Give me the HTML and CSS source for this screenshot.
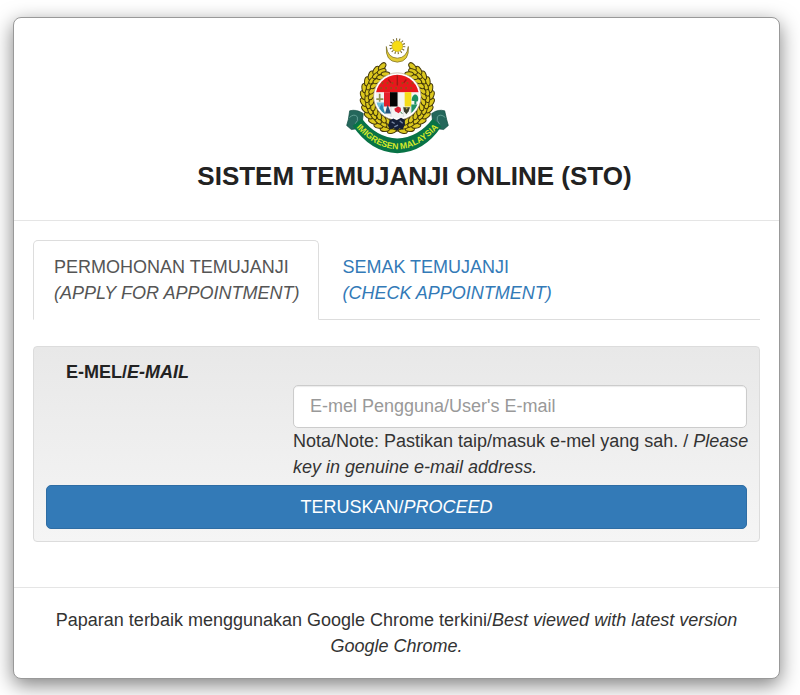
FILE: index.html
```
<!DOCTYPE html>
<html lang="ms">
<head>
  <meta charset="UTF-8" />
  <meta name="viewport" content="width=device-width, initial-scale=1.0" />
  <title>Sistem Temujanji Online (STO)</title>
  <link rel="stylesheet" href="styles.css">
</head>
<body>
  <main class="modal">
    <header class="modal-header">
      <svg class="logo" viewBox="30 20 312 350" role="img" aria-label="Imigresen Malaysia">
        <defs>
          <g id="leaf">
            <ellipse cx="188" cy="98" rx="14" ry="8" transform="rotate(-22 188 98)" />
            <ellipse cx="180" cy="110" rx="14" ry="7" transform="rotate(4 180 110)" />
            <ellipse cx="187" cy="122" rx="13" ry="7" transform="rotate(26 187 122)" />
          </g>
          <g id="wreath">
            <path d="M145 104 A104 104 0 0 0 187 304 L187 266 A67 67 0 0 1 150 143 Z" fill="#55480a" />
            <g fill="#dcc81e" stroke="#43380a" stroke-width="3">
              <use href="#leaf" transform="rotate(-171 187 200)" />
              <use href="#leaf" transform="rotate(-159 187 200)" />
              <use href="#leaf" transform="rotate(-147 187 200)" />
              <use href="#leaf" transform="rotate(-135 187 200)" />
              <use href="#leaf" transform="rotate(-123 187 200)" />
              <use href="#leaf" transform="rotate(-111 187 200)" />
              <use href="#leaf" transform="rotate(-99 187 200)" />
              <use href="#leaf" transform="rotate(-87 187 200)" />
              <use href="#leaf" transform="rotate(-75 187 200)" />
              <use href="#leaf" transform="rotate(-63 187 200)" />
              <use href="#leaf" transform="rotate(-51 187 200)" />
              <use href="#leaf" transform="rotate(-39 187 200)" />
              <use href="#leaf" transform="rotate(-27 187 200)" />
            </g>
          </g>
          <clipPath id="disc"><circle cx="187" cy="198" r="65" /></clipPath>
          <path id="motto" d="M58 285 Q187 427 316 285" />
        </defs>

        <!-- bulan dan bintang -->
        <path d="M154 48 Q150 93 187 95 Q224 93 220 48 Q216 82 187 83 Q158 82 154 48 Z" fill="#e3cc35" stroke="#6f641c" stroke-width="2" />
        <circle cx="187" cy="47" r="20" fill="none" stroke="#77682a" stroke-width="8" stroke-dasharray="3 6" />
        <circle cx="187" cy="47" r="16" fill="#f6dc12" stroke="#c3a71b" stroke-width="2" />

        <use href="#wreath" />
        <use href="#wreath" transform="translate(374 0) scale(-1 1)" />

        <!-- perisai -->
        <circle cx="187" cy="198" r="71" fill="#fff" stroke="#b9a98c" stroke-width="2" />
        <g clip-path="url(#disc)">
          <rect x="115" y="128" width="144" height="140" fill="#f4f5f3" />
          <rect x="115" y="128" width="144" height="57" fill="#e8171c" />
          <path d="M140 158 H236 M136 173 H240" stroke="#9b4b16" stroke-width="7" stroke-dasharray="5 10" />
          <path d="M187 135 V165 M160 147 L168 157 M214 147 L206 157" stroke="#a51814" stroke-width="4" />
          <rect x="147" y="185" width="20" height="43" fill="#e5202b" />
          <rect x="165" y="185" width="23" height="43" fill="#050505" />
          <rect x="209" y="185" width="20" height="43" fill="#f6dc19" />
          <path d="M124 206 H145 M134 190 V214" stroke="#8f9354" stroke-width="5" />
          <path d="M115 216 H147 V231 H115 Z" fill="#6fc0dc" />
          <path d="M128 239 L141 220 L151 251 Z" fill="#2b8aae" />
          <path d="M158 222 L150 249 H168 Z" fill="#25547c" />
          <path d="M230 211 C230 197 237 190 243 192 C251 196 252 211 247 213 Z M238 212 H244 V222 H238 Z" fill="#1d9060" />
          <rect x="229" y="222" width="26" height="34" fill="#239265" />
          <path d="M189 228 L197 232 L198 241 L191 248 L180 242 L178 235 Z" fill="#dd2335" />
          <path d="M196 243 L202 250" stroke="#3e7c48" stroke-width="3" />
          <path d="M204 230 H225 L221 242 L214 251 L207 242 Z" fill="#393e2d" />
          <path d="M211 231 H219 L215 238 Z" fill="#b9a836" />
          <path d="M168 228 V260 M205 228 V262 M227 228 V255 M188 185 V228" stroke="#aeb4b5" stroke-width="1" />
        </g>

        <!-- harimau -->
        <path d="M164 269 L175 264 L185 269 L198 262 L209 268 L210 282 L203 297 L193 294 L186 301 L176 293 L164 297 L159 286 Z" fill="#151f38" />
        <path d="M170 274 L179 279 M194 271 L203 278 M178 289 L189 284" stroke="#7888a3" stroke-width="4" />

        <!-- reben -->
        <path d="M44 241 Q64 235 85 249 L82 273 L66 295 L49 297 L35 285 L40 267 Z" fill="#24675b" stroke="#0b493d" stroke-width="2" />
        <path d="M329 241 Q309 235 290 249 L293 273 L309 295 L326 297 L340 285 L335 267 Z" fill="#24675b" stroke="#0b493d" stroke-width="2" />
        <path d="M43 261 Q58 248 67 259 Q71 270 60 281 M331 261 Q316 248 307 259 Q303 270 314 281" fill="none" stroke="#62a094" stroke-width="3" />
        <path d="M81 265 Q125 322 187 324 Q249 322 293 265 L319 288 Q267 366 187 368 Q107 366 53 286 Z" fill="#087346" />
        <text class="motto"><textPath href="#motto" startOffset="50%" text-anchor="middle">IMIGRESEN MALAYSIA</textPath></text>
      </svg>
      <h1>SISTEM TEMUJANJI ONLINE (STO)</h1>
    </header>

    <div class="modal-body">
      <nav class="tabs">
        <a class="tab active" href="#mohon">PERMOHONAN TEMUJANJI<br><i>(APPLY FOR APPOINTMENT)</i></a>
        <a class="tab" href="#semak">SEMAK TEMUJANJI<br><i>(CHECK APPOINTMENT)</i></a>
      </nav>

      <form class="well" id="mohon">
        <label for="email">E-MEL/<i>E-MAIL</i></label>
        <div class="field">
          <input type="email" id="email" placeholder="E-mel Pengguna/User's E-mail" />
          <p>Nota/Note: Pastikan taip/masuk e-mel yang sah. / <i>Please key in genuine e-mail address.</i></p>
        </div>
        <button type="submit">TERUSKAN/<i>PROCEED</i></button>
      </form>
    </div>

    <footer class="modal-footer">
      Paparan terbaik menggunakan Google Chrome terkini/<i>Best viewed with latest version Google Chrome.</i>
    </footer>
  </main>
</body>
</html>
```

FILE: styles.css
```
* {
  box-sizing: border-box;
}

body {
  margin: 0;
  padding: 17px 20px 16px 13px;
  font-family: "Liberation Sans", Arial, sans-serif;
  font-size: 18px;
  line-height: 26px;
  color: #333;
  background: white;
}

.modal {
  background: white;
  border: 1px solid #999;
  border-radius: 8px;
  box-shadow: 0 6px 20px rgba(0,0,0,0.5);
}

.modal-header {
  padding: 19px 20px 26px;
  text-align: center;
  border-bottom: 1px solid #e5e5e5;
}

.logo {
  display: block;
  width: 104px;
  height: 117px;
  margin: 0 auto;
}

.motto {
  font-family: "Liberation Sans Narrow", "Liberation Sans", Arial, sans-serif;
  font-size: 26px;
  font-weight: bold;
  fill: #d5e82b;
}

h1 {
  margin: 4px 0 0;
  padding-left: 36px;
  font-size: 26px;
  line-height: 36px;
  color: #222;
}

.modal-body {
  padding: 19px 19px 45px;
}

.tabs {
  display: flex;
  gap: 2px;
  border-bottom: 1px solid #ddd;
}

.tab {
  padding: 13px 19px 13px 20px;
  margin-bottom: -1px;
  border: 1px solid transparent;
  border-radius: 5px 5px 0 0;
  color: #337ab7;
  text-decoration: none;
}

.tab.active {
  color: #555;
  background: white;
  border-color: #ddd;
  border-bottom-color: white;
}

.well {
  margin-top: 26px;
  padding: 12px;
  background: linear-gradient(#e8e8e8, #f5f5f5);
  border: 1px solid #dcdcdc;
  border-radius: 4px;
}

label {
  display: block;
  padding-left: 20px;
  font-weight: bold;
  color: #222;
}

.field {
  margin-left: 247px;
}

.field p {
  margin: 0 -8px 5px 0;
}

input {
  display: block;
  width: 100%;
  height: 43px;
  padding: 0 16px;
  font-family: inherit;
  font-size: 18px;
  color: #555;
  background: white;
  border: 1px solid #ccc;
  border-radius: 5px;
  box-shadow: inset 0 1px 1px rgba(0,0,0,0.08);
}

input::placeholder {
  color: #999;
}

button {
  display: block;
  width: 100%;
  height: 44px;
  font-family: inherit;
  font-size: 18px;
  color: white;
  background: #337ab7;
  border: 1px solid #2e6da4;
  border-radius: 5px;
  cursor: pointer;
}

.modal-footer {
  padding: 19px 20px;
  text-align: center;
  border-top: 1px solid #e5e5e5;
}
```
